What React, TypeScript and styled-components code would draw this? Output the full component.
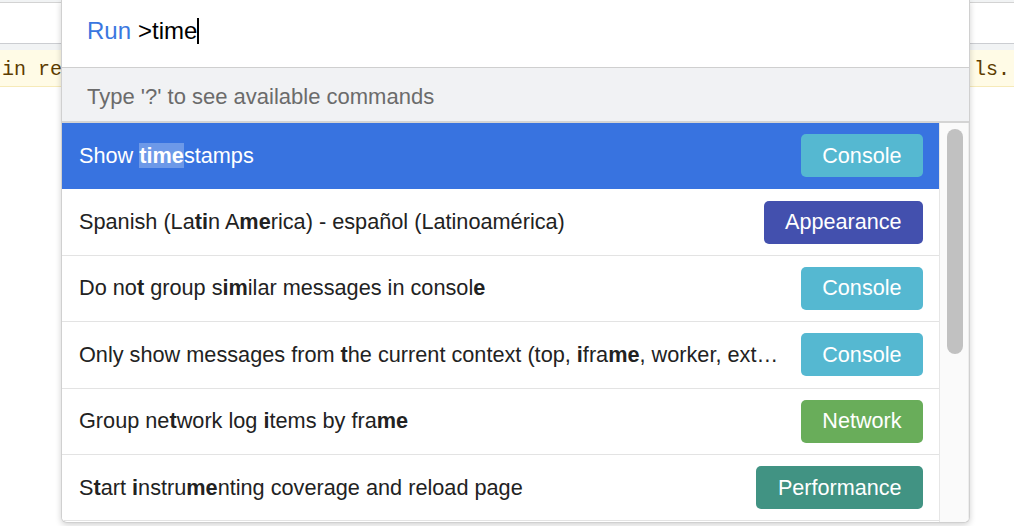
import React from 'react';
import styled, {createGlobalStyle} from 'styled-components';

const GlobalStyle = createGlobalStyle`
  html, body {
    margin: 0;
    padding: 0;
    background: #fff;
  }
`;

const Page = styled.div`
  position: relative;
  width: 1014px;
  height: 526px;
  overflow: hidden;
  background: #fff;
  font-family: "Liberation Sans", Arial, sans-serif;
`;

const TopStrip = styled.div`
  height: 2px;
  background: #f1f3f4;
  border-bottom: 1px solid #d3d3d3;
`;
const Toolbar = styled.div`
  height: 40px;
  background: #fff;
`;
const Divider = styled.div`
  height: 6px;
  background: #f1f3f4;
  border-top: 1px solid #cbcdd1;
`;
const WarningBar = styled.div`
  height: 37px;
  box-sizing: border-box;
  display: flex;
  justify-content: space-between;
  align-items: center;
  padding: 3px 4px 0 2px;
  background: #fffbe6;
  border-bottom: 1px solid #f6eab8;
  color: #5c3c00;
  font-family: "Liberation Mono", "DejaVu Sans Mono", monospace;
  font-size: 20px;
`;

const Panel = styled.div`
  position: absolute;
  left: 61px;
  top: 0;
  width: 909px;
  height: 523px;
  box-sizing: border-box;
  display: flex;
  flex-direction: column;
  background: #fff;
  border: 1px solid #d0d0d0;
  border-top: none;
  border-radius: 0 0 6px 6px;
  box-shadow: 0 2px 6px rgba(0, 0, 0, 0.18);
  overflow: hidden;
`;

const InputRow = styled.div`
  height: 67px;
  flex-shrink: 0;
  display: flex;
  align-items: center;
  padding: 0 0 5px 25px;
  box-sizing: border-box;
  font-size: 24px;
  color: #000;
`;
const Prompt = styled.span`
  color: #3a77e0;
  margin-right: 7px;
`;
const Caret = styled.span`
  display: inline-block;
  width: 2px;
  height: 26px;
  background: #000;
`;

const HintRow = styled.div`
  height: 56px;
  flex-shrink: 0;
  box-sizing: border-box;
  display: flex;
  align-items: center;
  padding: 4px 0 0 25px;
  background: #f1f2f4;
  border-top: 1px solid #cfcfcf;
  border-bottom: 2px solid #d4d4d4;
  color: #6b6b6b;
  font-size: 22px;
`;

const Body = styled.div`
  flex: 1;
  display: flex;
  min-height: 0;
`;
const List = styled.div`
  flex: 1;
  display: flex;
  flex-direction: column;
  min-width: 0;
`;
const Row = styled.div<{ $selected?: boolean }>`
  height: 66.4px;
  flex-shrink: 0;
  box-sizing: border-box;
  display: flex;
  align-items: center;
  padding: 0 16px 0 17px;
  border-bottom: 1px solid ${p => (p.$selected ? '#3873e0' : '#e3e3e3')};
  background: ${p => (p.$selected ? '#3873e0' : '#fff')};
  color: ${p => (p.$selected ? '#fff' : '#222')};
  font-size: 21.7px;
`;
const Label = styled.span`
  flex: 1;
  min-width: 0;
  white-space: nowrap;
  overflow: hidden;
  text-overflow: ellipsis;
  margin-right: 20px;
`;
const Match = styled.b<{ $selected?: boolean }>`
  font-weight: 700;
  background: ${p => (p.$selected ? 'rgba(255, 255, 255, 0.27)' : 'transparent')};
`;
const Badge = styled.span<{ $color: string }>`
  flex-shrink: 0;
  height: 43px;
  display: flex;
  align-items: center;
  padding: 0 21.5px;
  border-radius: 5px;
  background: ${p => p.$color};
  color: #fff;
  font-size: 21.6px;
`;

const ScrollTrack = styled.div`
  width: 30px;
  flex-shrink: 0;
  box-sizing: border-box;
  padding: 6px 0 0 7px;
  background: #fafafa;
  border-left: 1px solid #e6e6e6;
  border-right: 1px solid #ededed;
`;
const ScrollThumb = styled.div`
  width: 16px;
  height: 225px;
  border-radius: 8px;
  background: #c1c1c1;
`;

const BADGE_COLORS: Record<string, string> = {
  Console: '#55b8d1',
  Appearance: '#4350ae',
  Network: '#69ad5a',
  Performance: '#419383',
};

const COMMANDS = [
  {label: 'Show [time]stamps', category: 'Console'},
  {label: 'Spanish (La[ti]n A[me]rica) - español (Latinoamérica)', category: 'Appearance'},
  {label: 'Do no[t] group s[im]ilar messages in consol[e]', category: 'Console'},
  {label: 'Only show messages from [t]he current context (top, [i]fra[me], worker, extension)', category: 'Console'},
  {label: 'Group ne[t]work log [i]tems by fra[me]', category: 'Network'},
  {label: 'S[t]art [i]nstru[me]nting coverage and reload page', category: 'Performance'},
];

// brackets mark the characters that matched the query
function renderLabel(label: string, selected: boolean) {
  return label.split(/\[([^\]]+)\]/).map((part, i) =>
    i % 2 === 1 ? (
      <Match key={i} $selected={selected && i === 1 && part === 'time'}>{part}</Match>
    ) : (
      <React.Fragment key={i}>{part}</React.Fragment>
    )
  );
}

export default function App() {
  const selectedIndex = 0;
  return (
    <Page>
      <GlobalStyle />
      <TopStrip />
      <Toolbar />
      <Divider />
      <WarningBar>
        <span>in re</span>
        <span>ls.</span>
      </WarningBar>

      <Panel>
        <InputRow>
          <Prompt>Run</Prompt>
          <span>&gt;time</span>
          <Caret />
        </InputRow>
        <HintRow>Type '?' to see available commands</HintRow>
        <Body>
          <List>
            {COMMANDS.map((cmd, i) => (
              <Row key={cmd.label} $selected={i === selectedIndex}>
                <Label>{renderLabel(cmd.label, i === selectedIndex)}</Label>
                <Badge $color={BADGE_COLORS[cmd.category]}>{cmd.category}</Badge>
              </Row>
            ))}
          </List>
          <ScrollTrack>
            <ScrollThumb />
          </ScrollTrack>
        </Body>
      </Panel>
    </Page>
  );
}
